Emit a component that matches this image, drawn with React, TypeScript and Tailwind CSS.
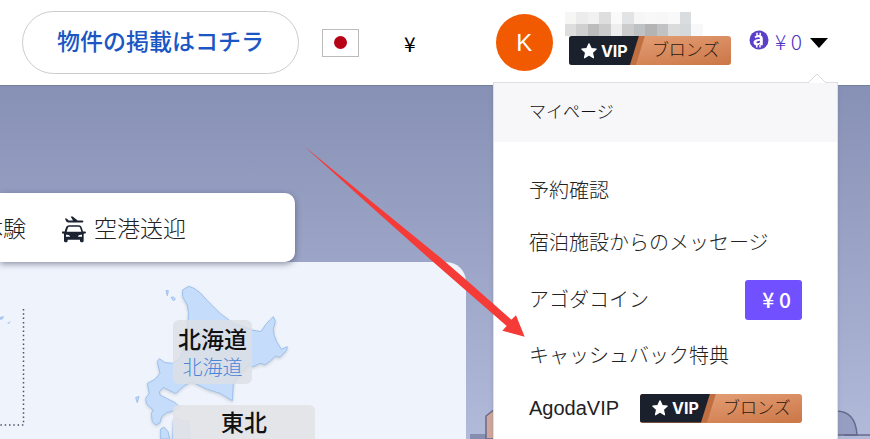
import React from 'react';

const mosaic = [
  'bg-[#f6f6f5]',
  'bg-[#ececec]',
  'bg-[#f1f1f1]',
  'bg-[#dededf]',
  'bg-[#fafafa]',
  'bg-[#e2e3e5]',
  'bg-[#f6f6f6]',
  'bg-[#f8f8f8]',
  'bg-[#f7f7f7]',
  'bg-[#f9f9f9]',
  'bg-[#dadde0]',
  'bg-white',
  'bg-[#dedede]',
  'bg-[#d0d0d0]',
  'bg-[#bcbcbd]',
  'bg-[#cbcbcc]',
  'bg-[#eeeeee]',
  'bg-[#cccccd]',
  'bg-[#c0c1c2]',
  'bg-[#b3b4b3]',
  'bg-[#c1c2c3]',
  'bg-[#d9dcda]',
  'bg-[#d6d9dc]',
  'bg-[#f8f8f8]',
];

const VipBadge = () => (
  <span className="relative flex h-[29px] w-[162px] shrink-0 items-center overflow-hidden rounded-[3px] bg-linear-to-br from-[#e9a880] to-[#cb7646]">
    <span className="absolute inset-y-0 left-0 w-[76px] bg-[#c06f42] [clip-path:polygon(0_0,100%_0,67px_100%,0_100%)]" />
    <span className="absolute inset-y-0 left-0 w-[70px] bg-[#1a212d] [clip-path:polygon(0_0,100%_0,61px_100%,0_100%)]" />
    <span className="relative flex w-[83px] items-center gap-1 pl-3 font-['Inter',sans-serif] text-base leading-none font-bold text-white">
      <svg viewBox="0 0 16 16" className="size-4" fill="#fff" stroke="#fff" strokeWidth="1.200" strokeLinejoin="round">
        <path d="M8 .8l2.200 4.800 5 .5-3.800 3.500 1.100 5.200L8 12.100l-4.500 2.700 1.100-5.200L.8 6.100l5-.5z" />
      </svg>
      VIP
    </span>
    <span className="relative text-[17px] leading-none font-light text-[#2b1810]">ブロンズ</span>
  </span>
);

const CoinIcon = () => (
  <svg viewBox="0 0 20 20" className="-mt-1.5 size-5" fill="none">
    <circle cx="10" cy="10" r="9.500" fill="#5a3fc8" />
    <path
      d="M5.500 6.800c1.200-1.200 2.700-1.700 4.300-1.700 2.600 0 4 1.200 4 3.400v6.700h-2.600l-.2-1.200c-.9.900-2 1.400-3.300 1.400-2 0-3.200-1.200-3.200-2.900 0-2.300 2-3.300 6.500-3.500 0-1.200-.6-1.700-1.800-1.700-.9 0-1.800.3-2.700.9z"
      fill="#fff"
    />
    <path d="M11 10.800c-2.500.2-3.500.6-3.500 1.500 0 .7.500 1 1.200 1s1.400-.3 2.300-1.100z" fill="#5a3fc8" />
    <path d="M8 2.800v3M11.200 2.800v3M7.800 15v2.500M11 15v2.500" stroke="#fff" strokeWidth="1.500" />
  </svg>
);

const TaxiIcon = () => (
  <svg viewBox="0 0 72 80" className="h-[27px] w-6" fill="#1b2230">
    <path d="M9 6l6 2 5 5 13 0-7-12h6l15 12h12c7 0 7 6 0 6H20c-6 0-9-5-11-13z" />
    <path
      fillRule="evenodd"
      d="M22 27h28c6 0 8 3 10 9l3 10h6c4 0 4 5 0 6l-4 1v21c0 6-11 6-11 0v-3H17v3c0 6-11 6-11 0V53l-4-1c-4-1-4-6 0-6h6l3-10c2-6 5-9 11-9zm1 5c-4 0-5 2-6 5l-3 10h44l-3-10c-1-3-2-5-6-5zM12 56v6h12c0-5-5-7-12-6zm48 0c-7-1-12 1-12 6h12z"
    />
  </svg>
);

const Header = () => (
  <header className="flex h-[85px] shrink-0 items-center bg-white pr-[42px] pl-[22px]">
    <a
      href="#list"
      className="flex h-[63px] w-[277px] shrink-0 items-center justify-center rounded-full border border-[#ccc] text-[23px] font-medium text-[#1a56c4]"
    >
      物件の掲載はコチラ
    </a>
    <button
      aria-label="日本語"
      className="ml-[23px] flex h-7 w-[37px] shrink-0 items-center justify-center border border-[#bbb] bg-white"
    >
      <span className="size-[13px] rounded-full bg-[#b80016]" />
    </button>
    <button className="ml-[45px] font-['Noto_Sans_CJK_JP',sans-serif] text-[21px] leading-7 text-black">¥</button>
    <div className="ml-auto flex shrink-0 items-center">
      <span className="flex size-[57px] items-center justify-center rounded-full bg-[#f15a00] text-2xl text-white">
        K
      </span>
      <div className="ml-3 -mt-2">
        <div className="grid w-[138px] grid-cols-12">
          {mosaic.map((shade, i) => (
            <span key={i} className={`h-3 ${shade}`} />
          ))}
        </div>
        <div className="pl-1">
          <VipBadge />
        </div>
      </div>
      <button className="ml-[18px] flex items-center font-['Noto_Sans_CJK_JP',sans-serif] text-[21px] leading-7 font-light text-[#4f35c4]">
        <CoinIcon />
        <span className="-mt-1 ml-1.5">¥ 0</span>
        <svg viewBox="0 0 18 10" className="ml-2 h-2.5 w-[18px]">
          <path d="M0 0h18L9 10z" />
        </svg>
      </button>
    </div>
  </header>
);

const HokkaidoMap = () => (
  <svg
    viewBox="0 0 600 507"
    className="absolute top-2 left-[120px] h-[169px] w-[200px] overflow-visible"
    fill="#c5ddfb"
    stroke="#9dc0ec"
    strokeWidth="3"
    strokeLinejoin="round"
  >
    <g className="drop-shadow-lg">
      <path d="M188 60L206 49 222 55 240 68 262 92 300 130 340 160 396 180 423 185 440 160 452 148 460 140 466 155 460 175 462 195 470 215 484 238 502 230 500 240 480 262 466 258 452 272 435 284 420 280 400 290 385 285 360 310 340 340 337 392 300 370 262 358 215 335 195 345 167 370 150 362 130 352 118 365 120 375 140 385 165 398 180 412 160 422 140 428 125 440 120 458 108 465 97 455 94 430 100 420 80 402 77 385 88 370 82 340 105 328 120 310 112 275 118 266 135 278 158 280 182 265 200 200 206 130 202 105 188 80z" />
      <path d="M160 450l10-9 12 9 22 4 6 53h-52zM122 477l10-6 12 14 5 22h-27z" />
    </g>
    <path d="M138 62h7l-3 15zM153 82l8-1 5 7-6 4zM47 383l10-4-5 19z" />
  </svg>
);

const Arrow = () => (
  <svg viewBox="0 0 750 660" className="pointer-events-none absolute top-[130px] left-[290px] h-[220px] w-[250px]">
    <path d="M41 47L240 211 450 382 540 460 664 569 678 556 704 620 637 602 650 588 520 475 400 370 220 209z" fill="#f53b38" />
  </svg>
);

const menuItem = 'flex items-center justify-between text-[#222]';

const UserMenu = () => (
  <nav className="absolute top-[82px] right-8 min-h-full w-[345px] border border-[#e0e0e3] bg-white text-xl font-light shadow-md">
    <svg viewBox="0 0 20 10" className="absolute -top-2.5 right-2.5 h-2.5 w-5" fill="#fff" stroke="#d9d9dc">
      <path d="M1 10l9-9 9 9" />
    </svg>
    <p className="flex h-[59px] items-center bg-[#f7f7f9] px-[35px] text-[17px] text-[#111]">マイページ</p>
    <div className="flex flex-col px-[35px] pt-[23px]">
      <a href="#bookings" className={`${menuItem} h-[52px]`}>
        予約確認
      </a>
      <a href="#messages" className={`${menuItem} h-[52px]`}>
        宿泊施設からのメッセージ
      </a>
      <a href="#coins" className={`${menuItem} h-[61px]`}>
        アゴダコイン
        <span className="flex h-10 w-[57px] items-center justify-end rounded-[3px] bg-[#7150ff] pr-[11px] font-['Noto_Sans_CJK_JP',sans-serif] text-[21px] font-medium text-white">
          ¥ 0
        </span>
      </a>
      <a href="#cashback" className={`${menuItem} h-[52px]`}>
        キャッシュバック特典
      </a>
      <a href="#vip" className={`${menuItem} h-[52px]`}>
        AgodaVIP
        <VipBadge />
      </a>
    </div>
  </nav>
);

const App = () => {
  return (
    <div className="relative flex h-screen flex-col overflow-hidden bg-white font-['Liberation_Sans','Noto_Sans_CJK_JP',sans-serif]">
      <Header />
      <main className="relative flex-1 border-t border-[#75809a] bg-linear-to-b from-[#8791b5] to-[#b2bada] pt-[107px]">
        <svg viewBox="0 0 400 32" className="absolute right-0 bottom-0 h-8 w-[400px]" stroke="#656a8b" strokeWidth="1.500">
          <path d="M0 27h16v5H0z" fill="#858eaf" stroke="none" />
          <path d="M16 32V9l9-7v30z" fill="#cfa79d" />
          <path d="M366 4c12 0 20 7 21 24h-21z" fill="#969fc3" />
          <path d="M374 28h26" />
        </svg>
        <div className="relative z-10 flex h-[69px] w-fit items-center gap-9 rounded-r-[10px] bg-white pt-1 pr-[109px] text-[23px] font-light text-[#222] shadow-[0_2px_6px_rgba(40,45,80,0.5)]">
          <a href="#activities" className="-ml-5">
            体験
          </a>
          <a href="#transfer" className="flex items-center gap-2">
            <TaxiIcon />
            空港送迎
          </a>
        </div>
        <section className="relative mr-[404px] h-full rounded-tr-[20px] bg-[#eef3fc]">
          <svg viewBox="0 0 30 170" className="absolute top-7 left-0 h-[170px] w-[30px]" fill="none">
            <path d="M23.500 19v116H0" stroke="#4c5068" strokeWidth="1.500" strokeDasharray="1.500 2.800" />
            <path d="M0 27l4-1-1 3-3 1zM7 33l4-2-2 3z" fill="#a9c8ef" />
          </svg>
          <HokkaidoMap />
          <div className="absolute top-[58px] left-[173px] flex h-16 w-[79px] flex-col items-center justify-center rounded-md bg-[#dce0e5]/80 pt-1">
            <h3 className="text-[23px] leading-7 font-medium text-[#111]">北海道</h3>
            <a href="#hokkaido" className="text-xl leading-7 font-light text-[#4c85d8]">
              北海道
            </a>
          </div>
          <div className="absolute top-[143px] left-[173px] flex h-16 w-[142px] flex-col items-center rounded-md bg-[#e1e3e7]/90 pt-1">
            <h3 className="text-[23px] leading-7 font-medium text-[#111]">東北</h3>
          </div>
        </section>
      </main>
      <UserMenu />
      <Arrow />
    </div>
  );
};

export default App;
